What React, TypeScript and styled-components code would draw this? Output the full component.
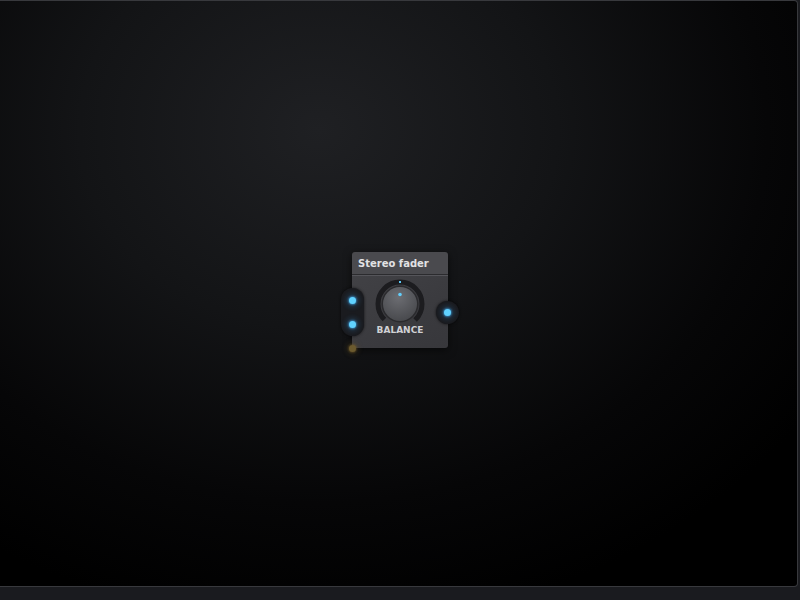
import React from 'react';
import styled, { createGlobalStyle } from 'styled-components';

const GlobalStyle = createGlobalStyle`
  html, body {
    margin: 0;
    padding: 0;
    height: 100%;
    background: #1a1b1f;
    font-family: "DejaVu Sans", "Liberation Sans", sans-serif;
  }
  #root {
    height: 100%;
  }
`;

const Screen = styled.div`
  display: flex;
  flex-direction: column;
  width: 800px;
  height: 600px;
  overflow: hidden;
`;

const Canvas = styled.div`
  position: relative;
  flex: 1;
  margin-right: 2px;
  border: 1px solid #38393d;
  border-left: none;
  border-radius: 0 4px 4px 0;
  background: radial-gradient(
    ellipse 75% 85% at 40% 22%,
    #1f2023 0%,
    #131416 40%,
    #060607 75%,
    #000 100%
  );
`;

const Footer = styled.div`
  height: 13px;
  background: #1a1b1f;
`;

const Node = styled.div<{ $x: number; $y: number }>`
  position: absolute;
  left: ${({ $x }) => $x}px;
  top: ${({ $y }) => $y}px;
  width: 96px;
  height: 96px;
`;

const Card = styled.div`
  display: flex;
  flex-direction: column;
  height: 100%;
  border-radius: 3px;
  overflow: hidden;
  box-shadow: 0 2px 8px rgba(0, 0, 0, 0.6);
`;

const Header = styled.div`
  height: 22px;
  padding: 0 6px;
  display: flex;
  align-items: center;
  background: #4a4a4e;
  border-bottom: 1px solid #2b2b2e;
  color: #e2e2e4;
  font-size: 10px;
  font-weight: bold;
`;

const Body = styled.div`
  flex: 1;
  display: flex;
  flex-direction: column;
  align-items: center;
  padding-top: 2px;
  border-top: 1px solid #55555a;
  background: linear-gradient(150deg, #414145 0%, #3b3b3f 55%, #37373b 100%);
`;

const KnobLabel = styled.div`
  margin-top: -5px;
  color: #d0d0d4;
  font-size: 9px;
  font-weight: bold;
`;

/* dark socket housings sit over the node edge */
const SocketGroup = styled.div<{ $left: number; $top: number; $h: number }>`
  position: absolute;
  z-index: 1;
  left: ${({ $left }) => $left}px;
  top: ${({ $top }) => $top}px;
  width: 23px;
  height: ${({ $h }) => $h}px;
  border-radius: 12px;
  background: #1a1b1f;
  box-shadow: 0 0 3px rgba(0, 0, 0, 0.7);
`;

const Port = styled.div<{ $left: number; $top: number; $color: string; $glow: string; $halo: string }>`
  position: absolute;
  z-index: 2;
  left: ${({ $left }) => $left - 3}px;
  top: ${({ $top }) => $top - 3}px;
  width: 7px;
  height: 7px;
  border-radius: 50%;
  background: ${({ $color }) => $color};
  box-shadow: 0 0 2px 1px ${({ $glow }) => $glow}, 0 0 4px 4px ${({ $halo }) => $halo};
`;

const Knob: React.FC = () => (
  <svg width="52" height="52" viewBox="0 0 52 52">
    <defs>
      <radialGradient id="knobFace" cx="45%" cy="30%" r="75%">
        <stop offset="0%" stopColor="#6c6d72" />
        <stop offset="100%" stopColor="#46474b" />
      </radialGradient>
    </defs>
    <circle
      cx="26"
      cy="26"
      r="22"
      fill="none"
      stroke="#1c1c1f"
      strokeWidth="5"
      strokeDasharray={`${(2 * Math.PI * 22 * 0.75).toFixed(2)} 200`}
      transform="rotate(135 26 26)"
    />
    <circle cx="26" cy="26" r="18.5" fill="#2a2a2d" />
    <circle cx="26" cy="26" r="17" fill="url(#knobFace)" />
    <rect x="25" y="3" width="2" height="2" fill="#5cc8f5" />
    <circle cx="26" cy="16.5" r="1.8" fill="#62cdfa" />
  </svg>
);

const BLUE = '#60d2ff';
const BLUE_GLOW = 'rgba(70, 180, 255, 0.55)';
const BLUE_HALO = 'rgba(60, 150, 220, 0.16)';

export default function App() {
  return (
    <Screen>
      <GlobalStyle />
      <Canvas>
        <Node $x={352} $y={251}>
          <Card>
            <Header>Stereo fader</Header>
            <Body>
              <Knob />
              <KnobLabel>BALANCE</KnobLabel>
            </Body>
          </Card>
          <SocketGroup $left={-11} $top={36} $h={48} />
          <SocketGroup $left={84} $top={49} $h={23} />
          <Port $left={0} $top={48} $color={BLUE} $glow={BLUE_GLOW} $halo={BLUE_HALO} />
          <Port $left={0} $top={72} $color={BLUE} $glow={BLUE_GLOW} $halo={BLUE_HALO} />
          <Port $left={95} $top={60} $color={BLUE} $glow={BLUE_GLOW} $halo={BLUE_HALO} />
          <Port
            $left={0}
            $top={96}
            $color="#6b5a2e"
            $glow="rgba(130, 105, 45, 0.45)"
            $halo="rgba(110, 90, 40, 0.14)"
          />
        </Node>
      </Canvas>
      <Footer />
    </Screen>
  );
}
